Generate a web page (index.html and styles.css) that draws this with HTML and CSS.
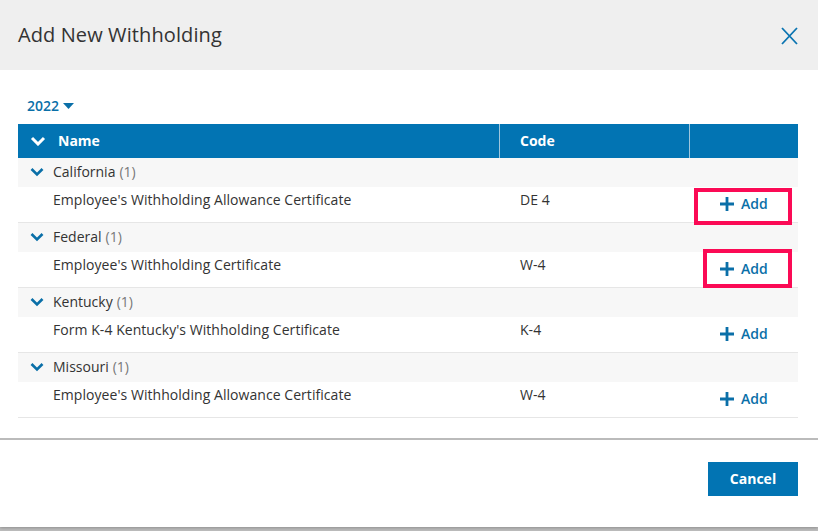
FILE: index.html
```html
<!DOCTYPE html>
<html lang="en">
<head>
<meta charset="utf-8">
<title>Add New Withholding</title>
<link rel="stylesheet" href="styles.css">
</head>
<body>
<div class="modal">
  <header class="modal-header">
    <h1 class="modal-title">Add New Withholding</h1>
    <button class="close-btn" aria-label="Close">
      <svg width="17" height="18" viewBox="0 0 17 18"><path d="M1 1 L16 17 M16 1 L1 17" stroke="#0a74b1" stroke-width="1.8" fill="none"/></svg>
    </button>
  </header>
  <main class="modal-body">
    <div class="year-select">2022 <svg width="12" height="7" viewBox="0 0 12 7"><path d="M0 0 H11 L5.5 6 Z" fill="#0a6fa8"/></svg></div>
    <div class="table">
      <div class="thead">
        <div class="th th-name">
          <svg class="chev" width="16" height="10" viewBox="0 0 16 10"><path d="M2 2 L8 8 L14 2" stroke="#fff" stroke-width="3" fill="none"/></svg>
          Name
        </div>
        <div class="th">Code</div>
        <div class="th th-last"></div>
      </div>

      <div class="group-row">
        <svg class="chev" width="16" height="10" viewBox="0 0 16 10"><path d="M2.5 2 L8 7.5 L13.5 2" stroke="#0a6fa8" stroke-width="2.6" fill="none"/></svg>
        <span class="group-name">California</span><span class="count">(1)</span>
      </div>
      <div class="item-row">
        <div class="td td-name">Employee's Withholding Allowance Certificate</div>
        <div class="td td-code">DE 4</div>
        <div class="td td-action">
          <button class="add-btn"><svg width="14" height="14" viewBox="0 0 14 14"><path d="M7 0 V14 M0 7 H14" stroke="#0a6fa8" stroke-width="2.8"/></svg>Add</button>
          <span class="highlight hl-1"></span>
        </div>
      </div>

      <div class="group-row">
        <svg class="chev" width="16" height="10" viewBox="0 0 16 10"><path d="M2.5 2 L8 7.5 L13.5 2" stroke="#0a6fa8" stroke-width="2.6" fill="none"/></svg>
        <span class="group-name">Federal</span><span class="count">(1)</span>
      </div>
      <div class="item-row">
        <div class="td td-name">Employee's Withholding Certificate</div>
        <div class="td td-code">W-4</div>
        <div class="td td-action">
          <button class="add-btn"><svg width="14" height="14" viewBox="0 0 14 14"><path d="M7 0 V14 M0 7 H14" stroke="#0a6fa8" stroke-width="2.8"/></svg>Add</button>
          <span class="highlight hl-2"></span>
        </div>
      </div>

      <div class="group-row">
        <svg class="chev" width="16" height="10" viewBox="0 0 16 10"><path d="M2.5 2 L8 7.5 L13.5 2" stroke="#0a6fa8" stroke-width="2.6" fill="none"/></svg>
        <span class="group-name">Kentucky</span><span class="count">(1)</span>
      </div>
      <div class="item-row">
        <div class="td td-name">Form K-4 Kentucky's Withholding Certificate</div>
        <div class="td td-code">K-4</div>
        <div class="td td-action">
          <button class="add-btn"><svg width="14" height="14" viewBox="0 0 14 14"><path d="M7 0 V14 M0 7 H14" stroke="#0a6fa8" stroke-width="2.8"/></svg>Add</button>
        </div>
      </div>

      <div class="group-row">
        <svg class="chev" width="16" height="10" viewBox="0 0 16 10"><path d="M2.5 2 L8 7.5 L13.5 2" stroke="#0a6fa8" stroke-width="2.6" fill="none"/></svg>
        <span class="group-name">Missouri</span><span class="count">(1)</span>
      </div>
      <div class="item-row">
        <div class="td td-name">Employee's Withholding Allowance Certificate</div>
        <div class="td td-code">W-4</div>
        <div class="td td-action">
          <button class="add-btn"><svg width="14" height="14" viewBox="0 0 14 14"><path d="M7 0 V14 M0 7 H14" stroke="#0a6fa8" stroke-width="2.8"/></svg>Add</button>
        </div>
      </div>
    </div>
  </main>
  <footer class="modal-footer">
    <button class="cancel-btn">Cancel</button>
  </footer>
</div>
</body>
</html>
```

FILE: styles.css
```css
* { box-sizing: border-box; }
html, body {
  margin: 0;
  padding: 0;
  height: 100%;
}
body {
  background: #bdbdbd;
  font-family: "Open Sans", "Noto Sans", sans-serif;
  color: #333;
  overflow: hidden;
}
.modal {
  background: #fff;
  height: 527px;
  display: flex;
  flex-direction: column;
  box-shadow: 0 1px 3px rgba(0,0,0,0.25);
}
.modal-header {
  height: 70px;
  background: #efefef;
  display: flex;
  align-items: center;
  justify-content: space-between;
  padding: 0 20px 0 18px;
}
.modal-title {
  margin: 0;
  font-size: 20px;
  font-weight: 400;
  color: #333;
  letter-spacing: 0.1px;
  position: relative;
  top: -1px;
}
.close-btn {
  border: 0;
  background: none;
  padding: 0;
  width: 17px;
  height: 18px;
  display: flex;
  margin-top: 2px;
}
.modal-body {
  flex: 1;
  padding: 26px 20px 0 18px;
}
.year-select {
  font-size: 14px;
  font-weight: 600;
  color: #0a6fa8;
  line-height: 20px;
  padding-left: 9px;
  display: flex;
  align-items: center;
  gap: 4px;
  margin-bottom: 8px;
}
.year-select svg { margin-top: 1px; }
.table {
  width: 780px;
}
.thead {
  display: grid;
  grid-template-columns: 482px 190px 108px;
  background: #0274b3;
  height: 34px;
}
.th {
  color: #fff;
  font-weight: 700;
  font-size: 14px;
  display: flex;
  align-items: center;
  padding-left: 20px;
  padding-bottom: 2px;
  border-right: 1px solid #9fc6dd;
}
.th-name {
  padding-left: 12px;
  gap: 12px;
}
.th-name .chev { margin-top: 1px; }
.th-last { border-right: 0; }
.group-row {
  height: 29px;
  background: #f7f7f7;
  display: flex;
  align-items: center;
  font-size: 14px;
  padding-left: 11px;
  padding-bottom: 2px;
}
.group-row .chev { margin-right: 8px; margin-top: 1px; }
.group-name { color: #333; }
.count { color: #777; margin-left: 4px; }
.item-row {
  display: grid;
  grid-template-columns: 482px 190px 108px;
  height: 36px;
  border-bottom: 1px solid #e6e6e6;
}
.td {
  font-size: 14px;
  line-height: 20px;
  padding-top: 3px;
  color: #333;
  letter-spacing: 0.05px;
}
.td-name { padding-left: 35px; }
.td-code { padding-left: 20px; }
.td-action {
  position: relative;
  padding-top: 0;
  display: flex;
  align-items: center;
  padding-left: 30px;
}
.add-btn {
  border: 0;
  background: none;
  font-family: inherit;
  font-size: 14px;
  font-weight: 600;
  color: #0a6fa8;
  display: flex;
  align-items: center;
  gap: 7px;
  padding: 0;
  margin-top: -2px;
}
.add-btn svg { margin-top: 1px; }
.highlight {
  position: absolute;
  border: 4px solid #fb0a55;
  pointer-events: none;
}
.hl-1 { left: 4px; top: 1px; width: 98px; height: 37px; }
.hl-2 { left: 13px; top: -3px; width: 89px; height: 39px; }
.modal-footer {
  border-top: 2px solid #bbb;
  height: 89px;
  display: flex;
  justify-content: flex-end;
  align-items: flex-start;
  padding: 22px 20px 0 0;
}
.cancel-btn {
  width: 90px;
  height: 34px;
  border: 0;
  background: #0274b3;
  color: #fff;
  font-family: inherit;
  font-size: 14px;
  font-weight: 700;
  padding-bottom: 2px;
}
```
